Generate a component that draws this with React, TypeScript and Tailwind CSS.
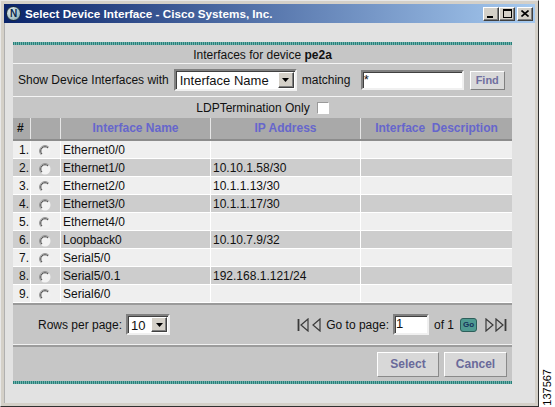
import React from "react";

const rows: [string, string][] = [
  ["Ethernet0/0", ""],
  ["Ethernet1/0", "10.10.1.58/30"],
  ["Ethernet2/0", "10.1.1.13/30"],
  ["Ethernet3/0", "10.1.1.17/30"],
  ["Ethernet4/0", ""],
  ["Loopback0", "10.10.7.9/32"],
  ["Serial5/0", ""],
  ["Serial5/0.1", "192.168.1.121/24"],
  ["Serial6/0", ""],
];

function Radio() {
  return (
    <svg width="12" height="12" viewBox="0 0 12 12">
      <circle cx="6" cy="6" r="5.5" fill="#f2f2f2" />
      <path d="M2.2 9.8 A5.3 5.3 0 0 1 9.8 2.2" fill="none" stroke="#8a8a8a" strokeWidth="1" />
      <path d="M3 9 A4.2 4.2 0 0 1 9 3" fill="none" stroke="#404040" strokeWidth="1" />
    </svg>
  );
}

function Arrow() {
  return (
    <span className="flex h-full w-[16px] items-center justify-center border border-t-white border-l-white border-b-[#404040] border-r-[#404040] bg-[#d4d0c8] shadow-[inset_-1px_-1px_0_#808080]">
      <svg width="7" height="4" viewBox="0 0 7 4">
        <path d="M0 0 H7 L3.5 4 Z" fill="#000" />
      </svg>
    </span>
  );
}

function Teal() {
  return <div className="h-[3px] bg-[repeating-linear-gradient(90deg,#2a7f7a_0_1px,#6fb3ad_1px_2px)]" />;
}

function PageIcon({ kind }: { kind: "first" | "prev" | "next" | "last" }) {
  const s = { fill: "none", stroke: "#3a3a3a", strokeWidth: 1.2 };
  if (kind === "first")
    return (
      <svg width="12" height="14" viewBox="0 0 12 14">
        <path d="M1.5 1 V13" {...s} strokeWidth={1.8} />
        <path d="M11 1 L4 7 L11 13 Z" {...s} />
      </svg>
    );
  if (kind === "prev")
    return (
      <svg width="10" height="14" viewBox="0 0 10 14">
        <path d="M9 1 L2 7 L9 13 Z" {...s} />
      </svg>
    );
  if (kind === "next")
    return (
      <svg width="10" height="14" viewBox="0 0 10 14">
        <path d="M1 1 L8 7 L1 13 Z" {...s} />
      </svg>
    );
  return (
    <svg width="12" height="14" viewBox="0 0 12 14">
      <path d="M1 1 L8 7 L1 13 Z" {...s} />
      <path d="M10.5 1 V13" {...s} strokeWidth={1.8} />
    </svg>
  );
}

export default function App() {
  return (
    <div className="flex h-[407px] w-[555px] bg-white font-['Liberation_Sans',Arial,sans-serif] text-[12px] text-[#111]">
      {/* window */}
      <div className="flex h-full w-[539px] flex-col border border-t-[#e8e8e8] border-l-[#e8e8e8] border-b-[#303030] border-r-[#303030] bg-[#d4d0c8] p-[3px]">
        {/* title bar */}
        <div className="flex h-[19px] items-center bg-[linear-gradient(90deg,#0a246a,#a6caf0)] pl-[2px] pr-[2px]">
          <div className="flex h-[15px] w-[15px] items-center justify-center rounded-full border border-[#1a2a3a] bg-[radial-gradient(circle_at_35%_35%,#e8f0f0,#7aa0a8)] text-[10px] font-bold leading-none text-[#0a2a50]">
            N
          </div>
          <span className="ml-[4px] text-[11.7px] font-bold text-white">
            Select Device Interface - Cisco Systems, Inc.
          </span>
          <div className="ml-auto flex items-center">
            <span className="flex h-[14px] w-[16px] items-end justify-start border border-t-white border-l-white border-b-[#404040] border-r-[#404040] bg-[#d4d0c8] pb-[2px] pl-[3px] shadow-[inset_-1px_-1px_0_#808080]">
              <span className="h-[2px] w-[6px] bg-black" />
            </span>
            <span className="flex h-[14px] w-[16px] items-center justify-center border border-t-white border-l-white border-b-[#404040] border-r-[#404040] bg-[#d4d0c8] shadow-[inset_-1px_-1px_0_#808080]">
              <span className="h-[9px] w-[9px] border border-t-2 border-black" />
            </span>
            <span className="ml-[2px] flex h-[14px] w-[16px] items-center justify-center border border-t-white border-l-white border-b-[#404040] border-r-[#404040] bg-[#d4d0c8] shadow-[inset_-1px_-1px_0_#808080]">
              <svg width="8" height="7" viewBox="0 0 8 7">
                <path d="M0.5 0.5 L7.5 6.5 M7.5 0.5 L0.5 6.5" stroke="#000" strokeWidth="1.6" />
              </svg>
            </span>
          </div>
        </div>

        {/* client area */}
        <div className="flex-1 border-l border-[#b0b0b0] bg-[#e2e2e2] pl-[8px] pt-[19px]">
          <div className="w-[499px] bg-[#c6c6c6]">
            <Teal />
            <div className="flex h-[18px] items-center justify-center pt-px">
              Interfaces for device&nbsp;<b>pe2a</b>
            </div>
            <div className="h-px bg-[#f4f4f4]" />
            <div className="flex h-[32px] items-center pl-[5px]">
              <span>Show Device Interfaces with</span>
              <div className="ml-[5px] flex h-[22px] w-[123px] items-stretch border-2 border-t-[#808080] border-l-[#808080] border-b-[#f0f0f0] border-r-[#f0f0f0] bg-white p-px shadow-[inset_1px_1px_0_#404040]">
                <span className="flex-1 pl-[3px] text-[13px] leading-[18px]">Interface Name</span>
                <Arrow />
              </div>
              <span className="ml-[5px] w-[59px]">matching</span>
              <div className="h-[20px] w-[103px] border-2 border-t-[#808080] border-l-[#808080] border-b-[#f0f0f0] border-r-[#f0f0f0] bg-white pl-[1px] text-[13px] leading-[15px] shadow-[inset_1px_1px_0_#404040]">
                *
              </div>
              <button className="ml-[6px] h-[19px] w-[35px] border border-t-white border-l-white border-b-[#808080] border-r-[#808080] bg-[#d9d9d9] text-[11px] font-bold text-[#7070a0]">
                Find
              </button>
            </div>
            <div className="h-px bg-[#f4f4f4]" />
            <div className="flex h-[21px] items-center justify-center">
              <span>LDPTermination Only</span>
              <span className="ml-[7px] h-[12px] w-[12px] border border-t-[#9a9a9a] border-l-[#9a9a9a] border-b-white border-r-white bg-white" />
            </div>

            {/* table */}
            <div className="grid h-[21px] grid-cols-[18px_30px_150px_150px_151px] bg-[#a9a9a9] font-bold text-[#6666cc]">
              <div className="border-r border-[#e6e6e6] pl-[4px] leading-[21px] text-[#111]">#</div>
              <div className="border-r border-[#e6e6e6]" />
              <div className="border-r border-[#e6e6e6] text-center leading-[21px]">Interface Name</div>
              <div className="border-r border-[#e6e6e6] text-center leading-[21px]">IP Address</div>
              <div className="text-center leading-[21px]">Interface{"\u00a0 "}Description</div>
            </div>
            <div className="h-[2px] bg-[#8c8c8c]" />
            {rows.map(([name, ip], i) => (
              <div
                key={i}
                className={`grid h-[18px] grid-cols-[18px_30px_150px_150px_151px] border-b border-white ${i % 2 === 0 ? "bg-[#efefef]" : "bg-[#cdcdcd]"}`}
              >
                <div className="border-r border-white pr-[1px] pt-px text-right leading-[17px]">{i + 1}.</div>
                <div className="flex items-center border-r border-white pl-[8px] pt-px">
                  <Radio />
                </div>
                <div className="border-r border-white pl-[2px] pt-px leading-[17px]">{name}</div>
                <div className="border-r border-white pl-[2px] pt-px leading-[17px]">{ip}</div>
                <div />
              </div>
            ))}
            <div className="h-[2px] bg-[#9a9a9a]" />

            {/* pagination */}
            <div className="flex h-[39px] items-center pl-[25px] pr-[5px]">
              <span>Rows per page:</span>
              <div className="ml-[4px] flex h-[21px] w-[44px] items-stretch border-2 border-t-[#808080] border-l-[#808080] border-b-[#f0f0f0] border-r-[#f0f0f0] bg-white p-px shadow-[inset_1px_1px_0_#404040]">
                <span className="flex-1 pl-[2px] text-[13px] leading-[17px]">10</span>
                <Arrow />
              </div>
              <div className="ml-auto flex items-center">
                <PageIcon kind="first" />
                <span className="ml-[2px]">
                  <PageIcon kind="prev" />
                </span>
                <span className="ml-[5px]">Go to page:</span>
                <div className="ml-[4px] h-[21px] w-[36px] border-2 border-t-[#808080] border-l-[#808080] border-b-[#f0f0f0] border-r-[#f0f0f0] bg-white pl-[1px] text-[13px] leading-[15px] shadow-[inset_1px_1px_0_#404040]">
                  1
                </div>
                <span className="ml-[5px]">of 1</span>
                <span className="ml-[6px] flex h-[14px] w-[17px] items-center justify-center rounded-[3px] border border-[#2d5f5a] bg-[#4f9a91] text-[8px] font-bold leading-none text-[#15305a]">
                  Go
                </span>
                <span className="ml-[8px]">
                  <PageIcon kind="next" />
                </span>
                <PageIcon kind="last" />
              </div>
            </div>
            <div className="h-px bg-[#f0f0f0]" />
            <div className="h-[2px] bg-[#9c9c9c]" />

            {/* buttons */}
            <div className="flex h-[34px] items-center justify-end gap-[5px] pr-[5px]">
              <button className="h-[25px] w-[62px] border border-t-white border-l-white border-b-[#8a8a8a] border-r-[#8a8a8a] bg-[#d8d8d8] text-[12px] font-bold text-[#6a6a9a]">
                Select
              </button>
              <button className="h-[25px] w-[63px] border border-t-white border-l-white border-b-[#8a8a8a] border-r-[#8a8a8a] bg-[#d8d8d8] text-[12px] font-bold text-[#6a6a9a]">
                Cancel
              </button>
            </div>
            <Teal />
          </div>
        </div>
      </div>

      {/* figure number strip */}
      <div className="flex flex-1 flex-col items-center justify-end pb-[1px]">
        <span className="rotate-180 text-[11px] leading-none text-black [writing-mode:vertical-rl]">137567</span>
      </div>
    </div>
  );
}
